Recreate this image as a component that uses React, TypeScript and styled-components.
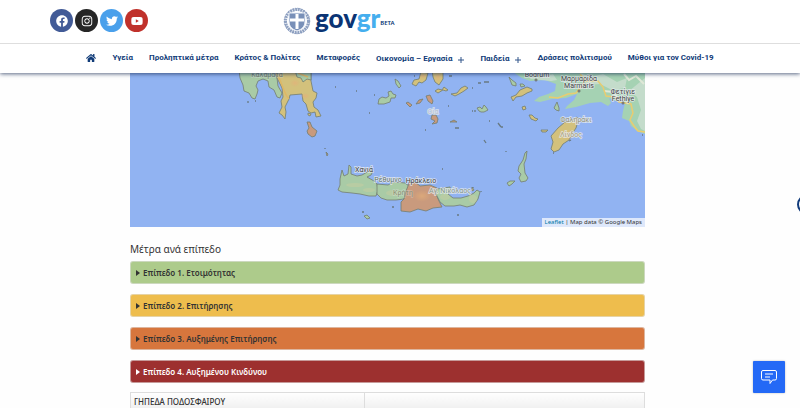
import React from "react";
import styled, { createGlobalStyle } from "styled-components";
import { FaFacebook, FaHome, FaInstagram, FaTwitter, FaYoutube } from "react-icons/fa";

const GlobalStyle = createGlobalStyle`
  * { box-sizing: border-box; }
  body { margin: 0; background: #fefefe; color: #333; font-family: "Noto Sans", "Open Sans", sans-serif; }
`;

const Page = styled.div`
  height: 100vh;
  overflow: hidden;
`;

const Header = styled.header`
  position: relative;
  z-index: 2;
  background: #fff;
  box-shadow: 0 1px 4px rgba(20, 40, 80, 0.7);
`;

const TopBar = styled.div`
  display: flex;
  align-items: flex-start;
  height: 44px;
  padding: 9px 50px 0;
  border-bottom: 1px solid #dedede;
`;

const Social = styled.div`
  display: flex;
  gap: 2px;
`;

const SocialLink = styled.a<{ $color: string }>`
  display: flex;
  align-items: center;
  justify-content: center;
  width: 23px;
  height: 23px;
  border-radius: 50%;
  background: ${(p) => p.$color};
  color: #fff;
  font-size: 12px;
`;

const Brand = styled.a`
  display: flex;
  align-items: center;
  height: 24px;
  margin-left: 135px;
  text-decoration: none;
  color: #0b3474;
`;

const Wordmark = styled.span`
  margin-left: 4px;
  padding-bottom: 7px;
  font: 900 26px/24px Lato, sans-serif;
  color: #0b3474;
  b { color: #45aeee; font-weight: 900; }
`;

const Beta = styled.span`
  padding-top: 3px;
  font: 600 6px/8px "Noto Sans", sans-serif;
`;

const Nav = styled.nav`
  display: flex;
  align-items: flex-start;
  justify-content: center;
  gap: 16px;
  height: 29px;
  padding-top: 8px;
`;

const NavLink = styled.a<{ $lower?: boolean }>`
  display: flex;
  align-items: center;
  gap: 6px;
  padding-top: ${(p) => (p.$lower ? 1 : 0)}px;
  color: #103b78;
  font: 700 8px/12px Roboto, sans-serif;
  text-decoration: none;
  white-space: nowrap;
  svg { display: block; margin-top: 1px; }
`;

const Main = styled.main`
  padding: 0 155px 0 130px;
`;

const MapFrame = styled.div`
  position: relative;
  background: #91b3f2;
  overflow: hidden;
  svg { display: block; width: 100%; height: auto; }
`;

const Attribution = styled.div`
  position: absolute;
  right: 0;
  bottom: 0;
  padding: 0 3px;
  background: rgba(255, 255, 255, 0.7);
  font: 6px/9px "Noto Sans", sans-serif;
  color: #333;
  a { color: #0078a8; text-decoration: none; }
`;

const Title = styled.h2`
  margin: 15px 0 5px;
  font: 400 10px/14px "Noto Sans", sans-serif;
  color: #333;
`;

const Levels = styled.div`
  display: flex;
  flex-direction: column;
  gap: 10px;
`;

const Level = styled.button<{ $color: string; $light?: boolean }>`
  display: flex;
  align-items: center;
  gap: 3px;
  height: 23px;
  padding: 0 5px;
  border: 1px solid rgba(225, 225, 225, 0.6);
  border-radius: 3px;
  background: ${(p) => p.$color};
  color: ${(p) => (p.$light ? "#fff" : "#333")};
  font: 600 8px/12px "Noto Sans", sans-serif;
  text-align: left;
`;

const Table = styled.table`
  width: 100%;
  margin-top: 9px;
  border-collapse: collapse;
  table-layout: fixed;
  background: linear-gradient(#fff, #eee);
  td {
    height: 18px;
    padding: 0 3px;
    border: 1px solid #ddd;
    font: 500 8px/12px "Noto Sans", sans-serif;
  }
  td:first-child { width: 234px; }
`;

const Chat = styled.button`
  position: fixed;
  right: 15px;
  bottom: 15px;
  display: flex;
  align-items: center;
  justify-content: center;
  width: 32px;
  height: 32px;
  padding: 0;
  border: 0;
  border-radius: 1px;
  background: #2469f6;
  box-shadow: 0 0 2px rgba(0, 0, 0, 0.3);
`;

const SideTab = styled.button`
  position: fixed;
  top: 195px;
  right: -15px;
  width: 18px;
  height: 19px;
  padding: 0;
  border: 2px solid #123c7c;
  border-radius: 50%;
  background: #fff;
`;

const GREEN = "#a9cba6";
const YELLOW = "#d3c17c";
const ORANGE = "#c99a7d";

const regions: [string, string][] = [
  [GREEN, "M239 70L240 78L243 85L244 91L249 93L252 98L255 99L257 94L258 90L256 86L258 81L263 79L268 81L269 87L274 90L277 97L280 98L282 93L278 86L277 78L274 70Z"],
  [YELLOW, "M274 70L277 78L282 88L283 97L281 101L282 107L279 113L282 115L285 119L286 112L285 107L289 99L290 95L302 94L303 101L306 104L308 111L311 113L315 112L316 117L321 116L318 110L314 107L313 102L316 98L317 93L313 91L311 81L311 70Z"],
  [GREEN, "M295 70L297 77L301 78L303 82L307 79L311 80L311 70Z"],
  [ORANGE, "M307 122L310 122L312 127L317 131L315 136L312 137L308 134L307 131L309 128Z"],
  [YELLOW, "M308 113L311 114L310 116L308 115Z"],
  [GREEN, "M395 79L398 81L401 86L399 88L396 84Z"],
  [GREEN, "M379 99L382 97L386 98L389 96L388 92L391 91L393 94L396 95L395 98L391 98L390 102L384 104L378 104Z"],
  [YELLOW, "M412 84L414 80L419 79L421 72L428 73L426 80L422 83L419 82L416 86Z"],
  [YELLOW, "M432 70L443 72L443 79L439 85L435 82L433 77Z"],
  [ORANGE, "M406 103L408 102L412 105L410 107Z"],
  [ORANGE, "M416 104L419 100L423 99L420 103Z"],
  [ORANGE, "M426 96L430 95L433 101L432 104L428 101Z"],
  [YELLOW, "M435 91L438 89L442 90L444 87L448 90L446 91L443 90L438 93Z"],
  [YELLOW, "M451 94L457 93L461 88L465 86L468 88L464 91L459 94L455 96Z"],
  [ORANGE, "M432 115L436 115L438 119L437 123L432 124L435 121L431 119Z"],
  [ORANGE, "M450 122L454 120L457 122Z"],
  [GREEN, "M477 108L480 107L482 109L484 105L486 107L488 110L484 112L481 112L479 111Z"],
  [GREEN, "M509 77L512 80L516 83L516 86L512 85Z"],
  [GREEN, "M520 84L523 84L525 86L521 87Z"],
  [YELLOW, "M511 97L516 95L520 90L527 87L532 89L532 91L527 93L522 96L516 97L513 101Z"],
  [YELLOW, "M522 107L525 106L526 109L523 110Z"],
  [YELLOW, "M529 115L532 115L535 118L538 119L536 121L531 119Z"],
  [GREEN, "M554 108L557 102L559 108L559 111L556 110Z"],
  [YELLOW, "M541 130L548 130L546 132L542 132Z"],
  [YELLOW, "M551 136L558 128L565 122L572 120L577 117L578 121L576 128L572 134L569 140L563 144L559 150L554 152L551 149L553 142Z"],
  [GREEN, "M525 153L527 151L526 159L524 164L525 173L528 178L526 181L521 182L519 178L521 174L518 171L519 166L523 160Z"],
  [GREEN, "M507 183L510 181L515 181L512 184L509 186Z"],
  [GREEN, "M342 170L344 176L348 174L349 165L351 167L351 174L357 176L362 175L369 171L373 171L371 175L367 177L374 181L377 184L378 190L376 196L369 196L360 194L352 193L342 192L338 190L340 185L340 179Z"],
  [GREEN, "M377 184L388 185L394 182L405 183L409 186L406 192L404 199L396 200L387 200L381 198L377 194Z"],
  [ORANGE, "M409 182L415 182L420 186L430 185L437 188L436 194L439 201L442 207L433 208L426 211L418 209L410 212L401 211L401 202L404 199L406 191L408 186Z"],
  [GREEN, "M437 189L444 188L450 187L451 191L448 194L453 198L461 198L468 196L474 193L477 190L480 192L478 199L474 205L467 207L460 205L454 206L445 206L440 202L436 194Z"],
  [GREEN, "M364 216L367 215L370 218L367 219Z"],
  [ORANGE, "M326 152L328 154L327 156Z"],
  [YELLOW, "M472 191L474 190L472 187Z"],
];

const islets = "M335 87h1M356 91h1M374 95h1M369 113h1M248 101v2M255 101h1M414 76h1M449 76h3M478 83h3M484 82h5M472 88h1M448 106h1M472 111h1M475 110v2M425 130h1M455 128h4M484 140l2 3M489 121h1M498 123l3 4M501 127h2M506 151v1M362 212h2M392 207h2M457 215h2M473 187v1M481 191v1M442 169h1M553 153h1M569 141l2-1M642 135h1M325 148v1";

function AegeanMap() {
  return (
    <svg viewBox="130 73 515 154" aria-label="Χάρτης Αιγαίου" role="img">
      <defs>
        <radialGradient id="relief"><stop stopColor="#e6b07a" /><stop offset="1" stopColor="#e6b07a" stopOpacity="0" /></radialGradient>
      </defs>
      <path fill="#a5d2b3" d="M510 70L522 78L530 81L545 80L556 84L555 91L548 94L539 97L534 101L540 102L552 99L566 98L577 94L574 100L567 106L565 109L576 107L590 103L601 102L608 106L611 103L609 98L615 101L620 99L625 103L623 111L622 118L629 121L631 126L637 131L645 134V70Z" />
      <path fill="#c4dccb" d="M527 76l12 2l14-4l4 6l-6 1l-20-2ZM580 73l11 4l12-3l14 8l10-4l-2 10l-13 2l-12-6l-13 1ZM629 91l8 6l4 13l-4 11l4 8l4 2V78Z" />
      <path fill="none" stroke="#dfe8d7" strokeWidth="2" d="M624 74l5 6l7-4l8 8M604 91l9 1l5 6" />
      <path fill="none" stroke="#e9cc70" strokeWidth="1.5" d="M549 97L558 98L568 94L576 93L580 88L585 81L598 81L603 87L606 96L615 97L619 102L631 104L633 113L630 120L634 126L638 131L645 132M580 74l6 7" />
      <g strokeWidth="0.8" stroke="#737e70" strokeLinejoin="round">
        {regions.map(([fill, d]) => <path key={d} d={d} fill={fill} />)}
      </g>
      <path d="M277 74C284 86 283 93 289 99M298 73l10 4" fill="none" stroke="#dfb764" strokeWidth="1.4" />
      <g fill="url(#relief)" opacity="0.65">
        <ellipse cx="295" cy="83" rx="5" ry="4" /><ellipse cx="305" cy="96" rx="5" ry="3" />
        <ellipse cx="423" cy="76" rx="4" ry="3" /><ellipse cx="438" cy="77" rx="4" ry="5" />
        <ellipse cx="569" cy="135" rx="7" ry="5" /><ellipse cx="422" cy="196" rx="9" ry="6" />
      </g>
      <g fill="#d6cfa0" opacity="0.35">
        <ellipse cx="355" cy="185" rx="9" ry="2" /><ellipse cx="369" cy="190" rx="6" ry="2" />
        <ellipse cx="393" cy="193" rx="7" ry="3" /><ellipse cx="445" cy="197" rx="5" ry="3" /><ellipse cx="473" cy="199" rx="4" ry="4" />
      </g>
      <path d={islets} fill="none" stroke="#687a83" strokeWidth="1.3" />
      <g fontFamily="Roboto, sans-serif" fontSize="7" textAnchor="middle" fill="#444" stroke="#e9edf0" strokeWidth="1.6" strokeOpacity="0.8" paintOrder="stroke">
        <text x="267" y="77" fill="#6f7b70" strokeOpacity="0.3">Καλαμάτα</text>
        <text x="537" y="77">Bodrum</text>
        <text x="579" y="81">Μαρμαρίδα</text>
        <text x="579" y="88">Marmaris</text>
        <text x="623" y="94">Φετίγιε</text>
        <text x="623" y="101">Fethiye</text>
        <text x="576" y="122" fill="#929078">Φαληράκι</text>
        <text x="571" y="137" fill="#a49a78">Λίνδος</text>
        <text x="364" y="172">Χανιά</text>
        <text x="388" y="182" fill="#65756b">Ρέθυμνο</text>
        <text x="421" y="183">Ηράκλειο</text>
        <text x="403" y="195" fill="#8c8d72" strokeOpacity="0.3">Κρήτη</text>
        <text x="450" y="193" fill="#879689">Αγ. Νικόλαος</text>
        <text x="433" y="114" fill="#b5bfcb">Οία</text>
      </g>
      <g fill="#fff" stroke="#555"><circle cx="536" cy="80" r="1" /><circle cx="579" cy="91" r="1" /><circle cx="623" cy="103" r="1" /></g>
    </svg>
  );
}

function Emblem() {
  return (
    <svg width="28" height="28" viewBox="0 0 28 28" aria-hidden="true">
      <circle cx="14" cy="14" r="11.5" fill="none" stroke="#8fa1c1" strokeWidth="3" strokeDasharray="2 0.6" />
      <circle cx="14" cy="14" r="12.8" fill="none" stroke="#7f94ba" strokeWidth="0.7" strokeDasharray="1.4 1" />
      <path d="M6 6H22V14C22 20 19 22 14 24C9 22 6 20 6 14Z" fill="#7990b8" stroke="#eef2f9" />
      <path d="M14 7V22M7 13H21" stroke="#fff" strokeWidth="3" />
    </svg>
  );
}

function Plus() {
  return <svg width="6" height="6" viewBox="0 0 6 6" aria-hidden="true"><path d="M3 0V6M0 3H6" stroke="#31558a" /></svg>;
}

const social = [
  { label: "Facebook", color: "#425b97", Icon: FaFacebook },
  { label: "Instagram", color: "#262626", Icon: FaInstagram },
  { label: "Twitter", color: "#4aa0eb", Icon: FaTwitter },
  { label: "YouTube", color: "#c0312b", Icon: FaYoutube },
];

const links = [
  { text: "Υγεία" },
  { text: "Προληπτικά μέτρα" },
  { text: "Κράτος & Πολίτες" },
  { text: "Μεταφορές" },
  { text: "Οικονομία – Εργασία", menu: true },
  { text: "Παιδεία", menu: true },
  { text: "Δράσεις πολιτισμού" },
  { text: "Μύθοι για τον Covid-19" },
];

const levels = [
  { text: "Επίπεδο 1. Ετοιμότητας", color: "#adcb8b" },
  { text: "Επίπεδο 2. Επιτήρησης", color: "#eebd4d" },
  { text: "Επίπεδο 3. Αυξημένης Επιτήρησης", color: "#d7763d" },
  { text: "Επίπεδο 4. Αυξημένου Κινδύνου", color: "#9d302f", light: true },
];

export default function App() {
  return (
    <Page>
      <GlobalStyle />
      <Header>
        <TopBar>
          <Social>
            {social.map(({ label, color, Icon }) => (
              <SocialLink key={label} href="#" aria-label={label} $color={color}><Icon /></SocialLink>
            ))}
          </Social>
          <Brand href="#">
            <Emblem />
            <Wordmark>gov<b>gr</b></Wordmark>
            <Beta>BETA</Beta>
          </Brand>
        </TopBar>
        <Nav>
          <NavLink href="#" aria-label="Αρχική"><FaHome size={10} /></NavLink>
          {links.map(({ text, menu }) => (
            <NavLink key={text} href="#" $lower={menu}>{text}{menu && <Plus />}</NavLink>
          ))}
        </Nav>
      </Header>
      <Main>
        <MapFrame>
          <AegeanMap />
          <Attribution><a href="#">Leaflet</a> | Map data © Google Maps</Attribution>
        </MapFrame>
        <Title>Μέτρα ανά επίπεδο</Title>
        <Levels>
          {levels.map(({ text, color, light }) => (
            <Level key={text} $color={color} $light={light}>
              <svg width="4" height="6" viewBox="0 0 4 6" aria-hidden="true"><path d="M0 0L4 3L0 6Z" fill="currentColor" /></svg>
              {text}
            </Level>
          ))}
        </Levels>
        <Table><tbody><tr><td>ΓΗΠΕΔΑ ΠΟΔΟΣΦΑΙΡΟΥ</td><td /></tr></tbody></Table>
      </Main>
      <SideTab aria-label="Προσβασιμότητα" />
      <Chat aria-label="Συνομιλία">
        <svg width="16" height="16" viewBox="0 0 16 16" fill="none" stroke="#fff" strokeLinejoin="round" aria-hidden="true">
          <path d="M2 1.5H14Q15.5 1.5 15.5 3V9.5Q15.5 11 14 11H11.5L9 14.5V11H2Q.5 11 .5 9.5V3Q.5 1.5 2 1.5ZM4 5H12M4 8H9" />
        </svg>
      </Chat>
    </Page>
  );
}
